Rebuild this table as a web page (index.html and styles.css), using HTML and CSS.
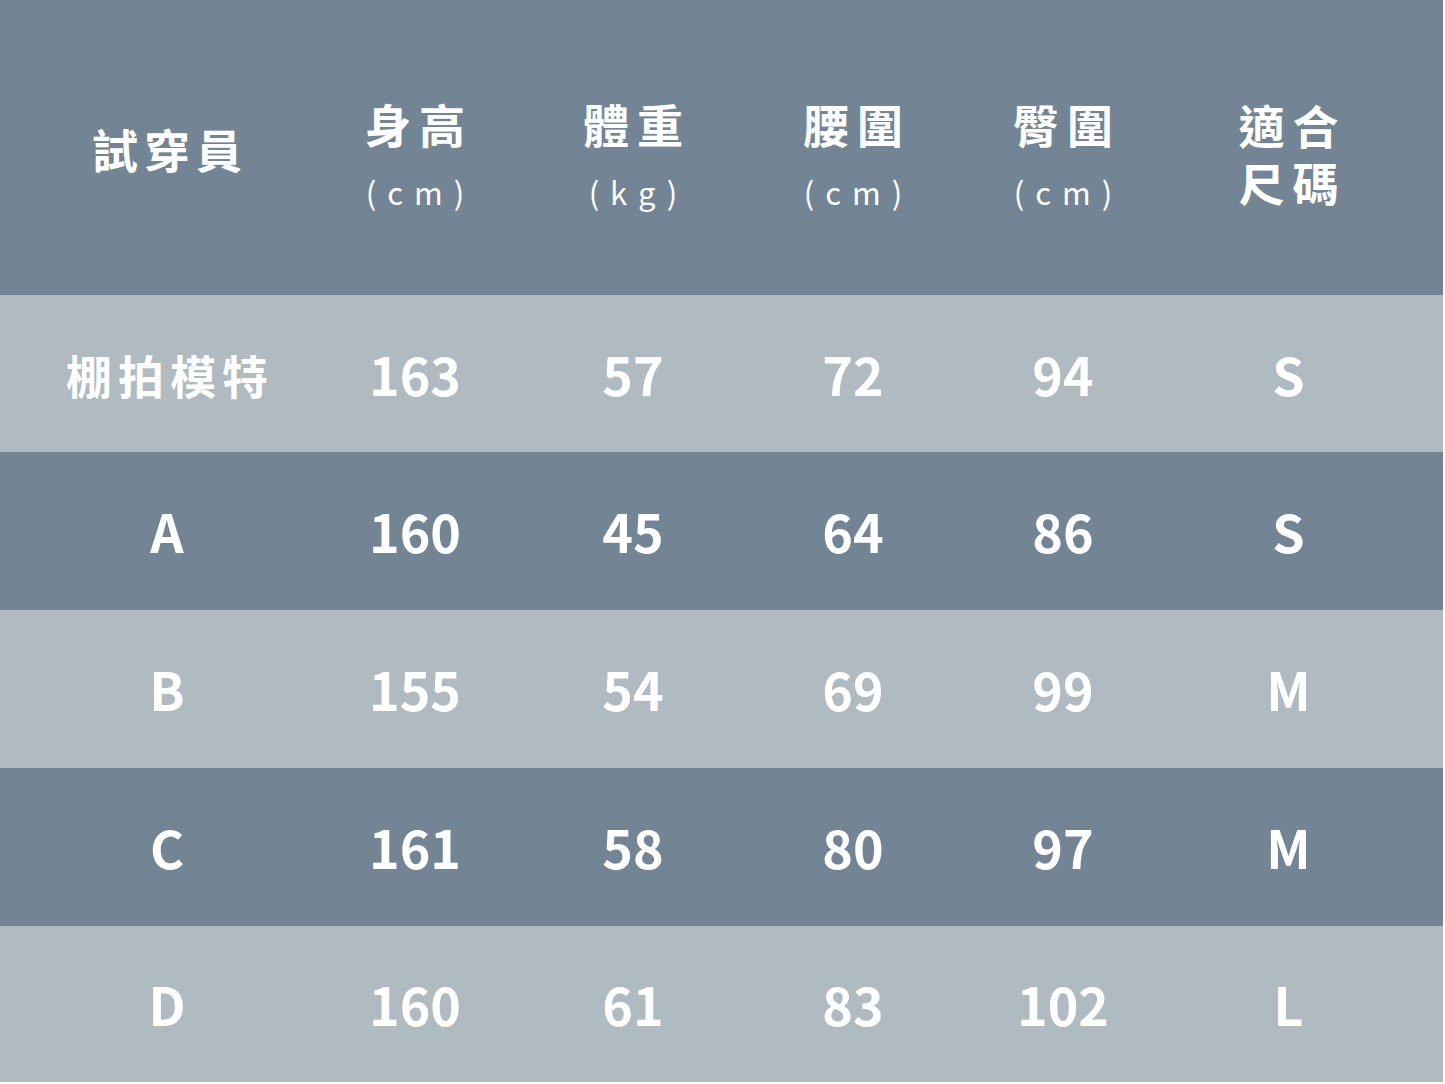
FILE: index.html
```html
<!DOCTYPE html>
<html lang="zh-Hant">
<head>
<meta charset="utf-8">
<link rel="stylesheet" href="styles.css">
</head>
<body>
<div class="table">
  <div class="row head dark">
    <div class="cell first"><span class="cjk">試穿員</span></div>
    <div class="cell"><span class="cjk">身高</span><span class="unit">(cm)</span></div>
    <div class="cell"><span class="cjk">體重</span><span class="unit">(kg)</span></div>
    <div class="cell"><span class="cjk">腰圍</span><span class="unit">(cm)</span></div>
    <div class="cell"><span class="cjk">臀圍</span><span class="unit">(cm)</span></div>
    <div class="cell last"><span class="cjk two">適合<br>尺碼</span></div>
  </div>
  <div class="row light">
    <div class="cell"><span class="cjk name">棚拍模特</span></div>
    <div class="cell num">163</div><div class="cell num">57</div><div class="cell num">72</div><div class="cell num">94</div><div class="cell num last">S</div>
  </div>
  <div class="row dark">
    <div class="cell num">A</div>
    <div class="cell num">160</div><div class="cell num">45</div><div class="cell num">64</div><div class="cell num">86</div><div class="cell num last">S</div>
  </div>
  <div class="row light">
    <div class="cell num">B</div>
    <div class="cell num">155</div><div class="cell num">54</div><div class="cell num">69</div><div class="cell num">99</div><div class="cell num last">M</div>
  </div>
  <div class="row dark">
    <div class="cell num">C</div>
    <div class="cell num">161</div><div class="cell num">58</div><div class="cell num">80</div><div class="cell num">97</div><div class="cell num last">M</div>
  </div>
  <div class="row light tall">
    <div class="cell num">D</div>
    <div class="cell num">160</div><div class="cell num">61</div><div class="cell num">83</div><div class="cell num">102</div><div class="cell num last">L</div>
  </div>
</div>
</body>
</html>
```
FILE: styles.css
```css
html, body {
  margin: 0;
  padding: 0;
  background: #ffffff;
}
body {
  font-family: "Noto Sans CJK TC", "Noto Sans CJK SC", sans-serif;
  color: #ffffff;
}
.table {
  width: 1443px;
  height: 1082px;
  display: flex;
  flex-direction: column;
}
.row {
  display: grid;
  grid-template-columns: 334px 162px 274px 166px 254px 253px;
  height: 158px;
}
.row.head { height: 295px; }
.row.tall { height: 156px; }
.row:nth-child(2) { height: 157px; }
.dark { background: #738594; }
.light { background: #afbac1; }
.cell {
  display: flex;
  flex-direction: column;
  align-items: center;
  justify-content: center;
}
.cell.last { padding-right: 56px; }
.cjk {
  font-size: 46px;
  font-weight: 600;
  letter-spacing: 8px;
  margin-right: -8px;
  line-height: 56px;
}
.head .cell { padding-top: 11px; }
.head .cell.first { padding-top: 0; }
.head .cell.first .cjk { letter-spacing: 6px; margin-right: -6px; }
.head .cell .cjk.two { line-height: 57px; text-align: center; }
.unit {
  font-size: 31px;
  font-weight: 400;
  letter-spacing: 11px;
  margin-right: -11px;
  line-height: 40px;
  margin-top: 21px;
}
.name {
  font-size: 46px;
  letter-spacing: 6px;
  margin-right: -6px;
}
.num {
  font-size: 52px;
  font-weight: 600;
  line-height: 1;
}
```
